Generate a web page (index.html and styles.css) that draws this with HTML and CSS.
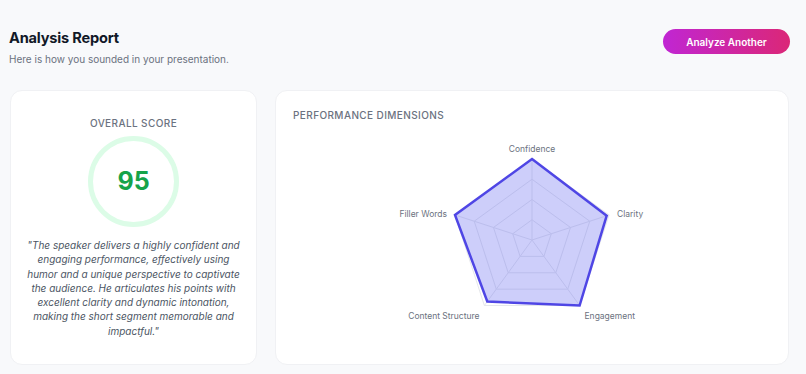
FILE: index.html
```html
<!DOCTYPE html>
<html lang="en">
<head>
<meta charset="utf-8">
<title>Analysis Report</title>
<link rel="stylesheet" href="styles.css">
</head>
<body>
<main class="page">
  <header class="header">
    <div class="heading">
      <h1 class="title">Analysis Report</h1>
      <p class="subtitle">Here is how you sounded in your presentation.</p>
    </div>
    <button class="btn">Analyze Another</button>
  </header>
  <section class="cards">
    <div class="card score-card">
      <h2 class="card-label">OVERALL SCORE</h2>
      <div class="ring"><span class="score">95</span></div>
      <p class="quote">"The speaker delivers a highly confident and<br>engaging performance, effectively using<br>humor and a unique perspective to captivate<br>the audience. He articulates his points with<br>excellent clarity and dynamic intonation,<br>making the short segment memorable and<br>impactful."</p>
    </div>
    <div class="card dims-card">
      <h2 class="card-label left">PERFORMANCE DIMENSIONS</h2>
      <svg class="radar" width="478" height="220" viewBox="0 0 478 220">
        <g class="grid">
          <polygon points="239,89.75 258.26,103.74 250.90,126.38 227.10,126.38 219.74,103.74"/>
          <polygon points="239,69.5 277.52,97.48 262.81,142.77 215.19,142.77 200.48,97.48"/>
          <polygon points="239,49.25 296.78,91.23 274.71,159.15 203.29,159.15 181.22,91.23"/>
          <polygon points="239,29 316.04,84.97 286.61,175.53 191.39,175.53 161.96,84.97"/>
          <line x1="239" y1="110" x2="239" y2="29"/>
          <line x1="239" y1="110" x2="316.04" y2="84.97"/>
          <line x1="239" y1="110" x2="286.61" y2="175.53"/>
          <line x1="239" y1="110" x2="191.39" y2="175.53"/>
          <line x1="239" y1="110" x2="161.96" y2="84.97"/>
        </g>
        <polygon class="area" points="239,29 313.7,85.7 286.6,175.5 194.3,171.5 162,85"/>
        <g class="labels">
          <text x="239" y="21.5" text-anchor="middle">Confidence</text>
          <text x="324" y="86.5" text-anchor="start">Clarity</text>
          <text x="291.5" y="188.5" text-anchor="start">Engagement</text>
          <text x="186.5" y="188.5" text-anchor="end">Content Structure</text>
          <text x="154" y="86.5" text-anchor="end">Filler Words</text>
        </g>
      </svg>
    </div>
  </section>
</main>
</body>
</html>
```
FILE: styles.css
```css
* { box-sizing: border-box; }
html, body { margin: 0; padding: 0; }
body {
  background: #f8f9fb;
  font-family: Inter, "Noto Sans", "Liberation Sans", sans-serif;
  color: #111827;
  width: 806px;
  height: 374px;
  overflow: hidden;
}
.page {
  padding: 28px 16px 0 9px;
}
.header {
  display: flex;
  justify-content: space-between;
  align-items: flex-start;
}
.title {
  margin: 0;
  font-size: 14.6px;
  line-height: 20px;
  font-weight: 700;
  letter-spacing: -0.2px;
  color: #111827;
}
.subtitle {
  margin: 3px 0 0;
  font-size: 10px;
  line-height: 16px;
  color: #6b7280;
}
.btn {
  margin-top: 1px;
  width: 127px;
  height: 25px;
  border: none;
  border-radius: 13px;
  background: linear-gradient(90deg, #c026d3 0%, #db2777 100%);
  color: #ffffff;
  font-family: inherit;
  font-size: 10px;
  font-weight: 600;
  padding: 0;
}
.cards {
  display: flex;
  gap: 18px;
  margin-top: 23px;
  padding-left: 1px;
}
.card {
  background: #ffffff;
  border: 1px solid #f0f1f4;
  border-radius: 12px;
  height: 275px;
}
.score-card {
  width: 247px;
  padding-top: 25px;
  display: flex;
  flex-direction: column;
  align-items: center;
}
.dims-card {
  width: 514px;
  padding: 17px 17px 0;
}
.card-label {
  margin: 0;
  font-size: 10px;
  line-height: 14px;
  font-weight: 500;
  letter-spacing: 0.4px;
  color: #6b7280;
  text-align: center;
}
.card-label.left {
  text-align: left;
}
.ring {
  margin-top: 6px;
  width: 91px;
  height: 91px;
  border: 5px solid #dcfce7;
  border-radius: 50%;
  display: flex;
  align-items: center;
  justify-content: center;
}
.score {
  font-size: 25px;
  font-weight: 700;
  color: #16a34a;
  line-height: 1;
}
.quote {
  margin: 11px 0 0;
  font-size: 10px;
  line-height: 14.3px;
  font-style: italic;
  color: #4b5563;
  text-align: center;
}
.radar {
  display: block;
  margin-top: 8px;
}
.grid polygon, .grid line {
  fill: none;
  stroke: #e5e7eb;
  stroke-width: 1;
}
.area {
  fill: #6366f1;
  fill-opacity: 0.32;
  stroke: #4f46e5;
  stroke-width: 2.5;
  stroke-linejoin: miter;
}
.labels text {
  font-family: Inter, "Noto Sans", sans-serif;
  font-size: 8.5px;
  fill: #6b7280;
}
```
